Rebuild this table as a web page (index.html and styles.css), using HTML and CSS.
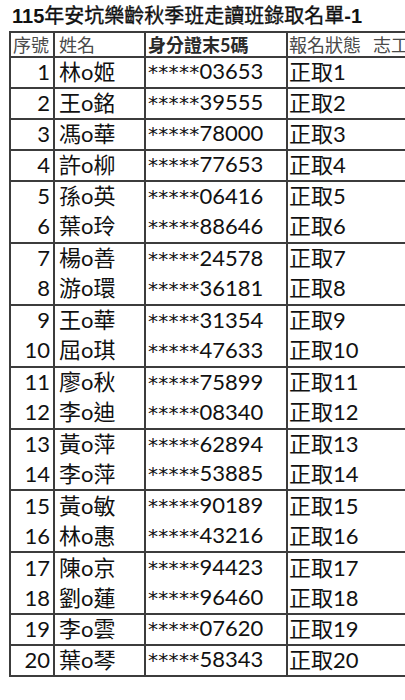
FILE: index.html
```html
<!DOCTYPE html>
<html lang="zh-Hant">
<head>
<meta charset="utf-8">
<title>115年安坑樂齡秋季班走讀班錄取名單-1</title>
<link rel="stylesheet" href="styles.css">
</head>
<body>
<div class="page">
  <h1 class="title"><span class="lat">115</span><span class="cjk">年安坑樂齡秋季班走讀班錄取名單</span><span class="lat">-1</span></h1>
  <table class="roster">
    <colgroup>
      <col class="c-no"><col class="c-name"><col class="c-id"><col class="c-status">
    </colgroup>
    <thead>
      <tr class="head">
        <th class="no-h">序號</th>
        <th class="name-h">姓名</th>
        <th class="id-h">身分證末5碼</th>
        <th class="status-h">報名狀態<span class="extra">志工</span></th>
      </tr>
    </thead>
    <tbody>
      <tr class="line"><td class="no">1</td><td class="name">林o姬</td><td class="id"><span class="mask">*****</span>03653</td><td class="status">正取1</td></tr>
      <tr class="line"><td class="no">2</td><td class="name">王o銘</td><td class="id"><span class="mask">*****</span>39555</td><td class="status">正取2</td></tr>
      <tr class="line"><td class="no">3</td><td class="name">馮o華</td><td class="id"><span class="mask">*****</span>78000</td><td class="status">正取3</td></tr>
      <tr class="line"><td class="no">4</td><td class="name">許o柳</td><td class="id"><span class="mask">*****</span>77653</td><td class="status">正取4</td></tr>
      <tr><td class="no">5</td><td class="name">孫o英</td><td class="id"><span class="mask">*****</span>06416</td><td class="status">正取5</td></tr>
      <tr class="line"><td class="no">6</td><td class="name">葉o玲</td><td class="id"><span class="mask">*****</span>88646</td><td class="status">正取6</td></tr>
      <tr><td class="no">7</td><td class="name">楊o善</td><td class="id"><span class="mask">*****</span>24578</td><td class="status">正取7</td></tr>
      <tr class="line"><td class="no">8</td><td class="name">游o環</td><td class="id"><span class="mask">*****</span>36181</td><td class="status">正取8</td></tr>
      <tr><td class="no">9</td><td class="name">王o華</td><td class="id"><span class="mask">*****</span>31354</td><td class="status">正取9</td></tr>
      <tr class="line"><td class="no">10</td><td class="name">屈o琪</td><td class="id"><span class="mask">*****</span>47633</td><td class="status">正取10</td></tr>
      <tr><td class="no">11</td><td class="name">廖o秋</td><td class="id"><span class="mask">*****</span>75899</td><td class="status">正取11</td></tr>
      <tr class="line"><td class="no">12</td><td class="name">李o迪</td><td class="id"><span class="mask">*****</span>08340</td><td class="status">正取12</td></tr>
      <tr><td class="no">13</td><td class="name">黃o萍</td><td class="id"><span class="mask">*****</span>62894</td><td class="status">正取13</td></tr>
      <tr class="line"><td class="no">14</td><td class="name">李o萍</td><td class="id"><span class="mask">*****</span>53885</td><td class="status">正取14</td></tr>
      <tr><td class="no">15</td><td class="name">黃o敏</td><td class="id"><span class="mask">*****</span>90189</td><td class="status">正取15</td></tr>
      <tr class="line"><td class="no">16</td><td class="name">林o惠</td><td class="id"><span class="mask">*****</span>43216</td><td class="status">正取16</td></tr>
      <tr><td class="no">17</td><td class="name">陳o京</td><td class="id"><span class="mask">*****</span>94423</td><td class="status">正取17</td></tr>
      <tr class="line"><td class="no">18</td><td class="name">劉o蓮</td><td class="id"><span class="mask">*****</span>96460</td><td class="status">正取18</td></tr>
      <tr class="line"><td class="no">19</td><td class="name">李o雲</td><td class="id"><span class="mask">*****</span>07620</td><td class="status">正取19</td></tr>
      <tr class="line"><td class="no">20</td><td class="name">葉o琴</td><td class="id"><span class="mask">*****</span>58343</td><td class="status">正取20</td></tr>
    </tbody>
  </table>
</div>
</body>
</html>
```

FILE: styles.css
```css
html, body {
  margin: 0;
  padding: 0;
  background: #ffffff;
  overflow: hidden;
}

.page {
  width: 405px;
  height: 700px;
  overflow: hidden;
  font-family: "Lato", "Noto Sans CJK TC", sans-serif;
  color: #111;
}

.title {
  margin: 0;
  height: 31px;
  box-sizing: border-box;
  padding: 2px 0 0 12px;
  line-height: 29px;
  font-size: 20px;
  font-weight: normal;
  white-space: nowrap;
  color: #111;
  font-family: "Liberation Sans", "Noto Sans CJK TC", sans-serif;
}

.title .lat {
  font-weight: bold;
}

.title .cjk {
  -webkit-text-stroke: 0.35px #111;
}

.roster {
  margin-left: 9px;
  border-collapse: separate;
  border-spacing: 0;
  table-layout: fixed;
  width: 430px;
  border-top: 2px solid #3c3c3c;
  border-left: 2px solid #3c3c3c;
}

.c-no { width: 44px; }
.c-name { width: 91px; }
.c-id { width: 142px; }
.c-status { width: 153px; }

.roster th,
.roster td {
  padding: 0;
  white-space: nowrap;
  overflow: visible;
  vertical-align: middle;
  border-right: 2px solid #3c3c3c;
}

.roster th.status-h,
.roster td.status {
  border-right: none;
}

.head {
  height: 25px;
}

.head th {
  border-bottom: 2px solid #3c3c3c;
  font-size: 18px;
  font-weight: normal;
  color: #4a4a4a;
  text-align: left;
  line-height: 20px;
}

.no-h { padding-left: 2px !important; }
.name-h { padding-left: 4px !important; }
.id-h {
  padding-left: 2px !important;
  font-weight: bold !important;
  color: #2a2a2a !important;
}
.status-h { padding-left: 1px !important; }

.extra {
  margin-left: 12px;
}

.roster tbody tr {
  height: 30.9px;
}

.roster tbody tr.line td {
  border-bottom: 2px solid #3c3c3c;
}

.roster td {
  font-size: 22px;
  line-height: 26px;
  padding-bottom: 2px;
}

.no {
  text-align: right;
  padding-right: 3px !important;
}

.name {
  padding-left: 4px !important;
}

.id {
  padding-left: 2px !important;
}

.mask {
  font-family: "DejaVu Sans", sans-serif;
  font-size: 20px;
  letter-spacing: 0.3px;
}

.status {
  padding-left: 1px !important;
}
```
